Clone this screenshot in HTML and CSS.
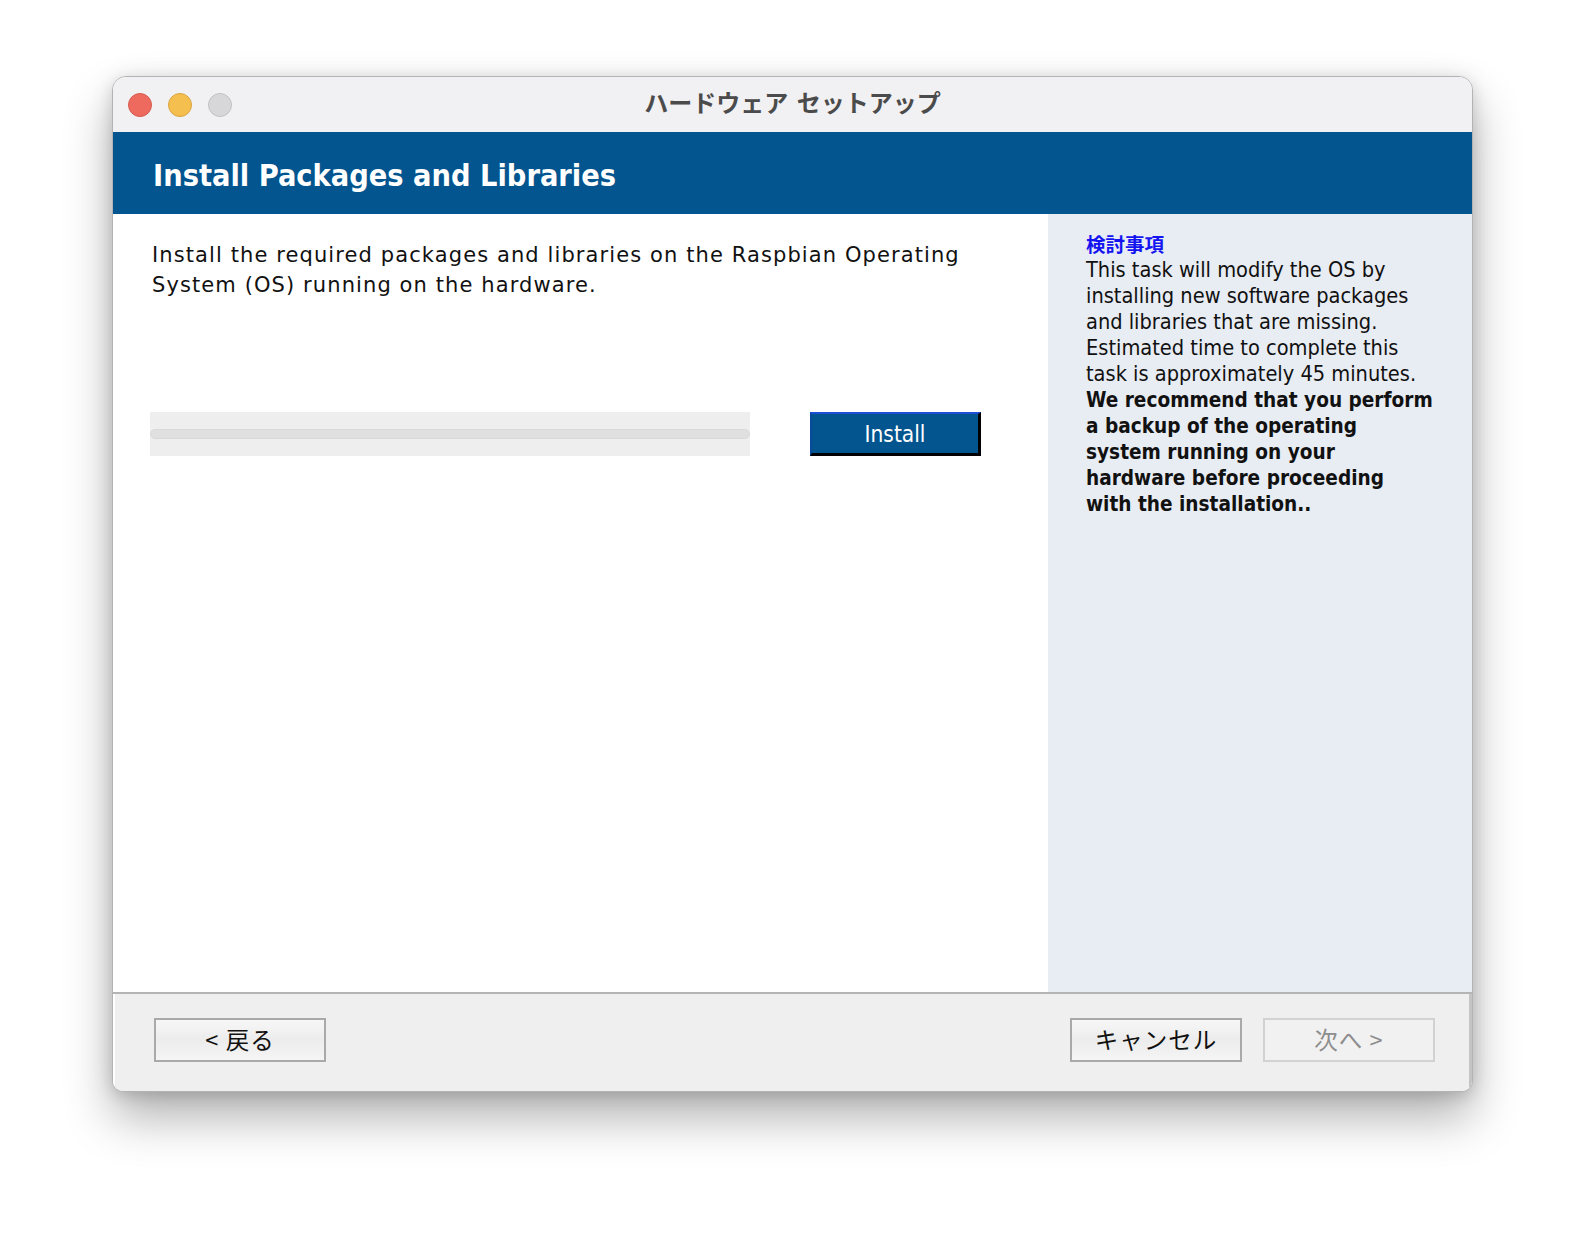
FILE: index.html
```html
<!DOCTYPE html>
<html lang="ja">
<head>
<meta charset="utf-8">
<title>ハードウェア セットアップ</title>
<link rel="stylesheet" href="styles.css">
</head>
<body>
<div class="stage">
  <div class="window">
    <div class="titlebar">
      <div class="lights">
        <span class="light red"></span>
        <span class="light yellow"></span>
        <span class="light gray"></span>
      </div>
      <div class="wtitle">ハードウェア セットアップ</div>
      <div class="tb-spacer"></div>
    </div>
    <div class="banner">
      <h1 class="banner-title">Install Packages and Libraries</h1>
    </div>
    <div class="main">
      <div class="pane">
        <p class="intro">Install the required packages and libraries on the Raspbian Operating<br>System (OS) running on the hardware.</p>
        <div class="install-row">
          <div class="progress"><div class="track"></div></div>
          <button class="install-btn">Install</button>
        </div>
      </div>
      <aside class="notes">
        <div class="notes-title">検討事項</div>
        <p class="notes-text">This task will modify the OS by<br>installing new software packages<br>and libraries that are missing.<br>Estimated time to complete this<br>task is approximately 45 minutes.<br><b class="notes-strong">We recommend that you perform<br>a backup of the operating<br>system running on your<br>hardware before proceeding<br>with the installation..</b></p>
      </aside>
    </div>
    <div class="footer">
      <button class="btn">&lt; 戻る</button>
      <div class="footer-spacer"></div>
      <button class="btn">キャンセル</button>
      <button class="btn btn-disabled">次へ &gt;</button>
    </div>
  </div>
</div>
</body>
</html>
```

FILE: styles.css
```css
html, body {
  margin: 0;
  padding: 0;
  background: #ffffff;
}

body {
  width: 1584px;
  height: 1240px;
  overflow: hidden;
  font-family: "DejaVu Sans", "Noto Sans CJK JP", sans-serif;
}

.stage {
  padding: 76px 0 0 112px;
}

.window {
  width: 1361px;
  height: 1016px;
  box-sizing: border-box;
  border: 1px solid #b3b3b3;
  border-radius: 14px 14px 11px 11px;
  overflow: hidden;
  display: flex;
  flex-direction: column;
  background: #ffffff;
  box-shadow: 0 26px 48px rgba(0, 0, 0, 0.30), 0 4px 14px rgba(0, 0, 0, 0.10), 0 0 24px rgba(0, 0, 0, 0.07);
}

/* title bar */
.titlebar {
  height: 55px;
  flex: none;
  background: #f1f0f2;
  display: grid;
  grid-template-columns: 1fr auto 1fr;
  align-items: center;
}

.lights {
  display: flex;
  gap: 16px;
  padding-left: 15px;
}

.light {
  width: 24px;
  height: 24px;
  box-sizing: border-box;
  border-radius: 50%;
  border: 1px solid transparent;
}

.red { background: #ee6a5f; border-color: #d65a4f; }
.yellow { background: #f5bf4f; border-color: #dba43f; }
.gray { background: #d7d6d8; border-color: #c2c1c3; }

.wtitle {
  font-family: "Noto Sans CJK JP", sans-serif;
  font-weight: 700;
  font-size: 24px;
  letter-spacing: 0;
  word-spacing: 3px;
  color: #4b4b4b;
  margin-bottom: 6px;
}

/* blue banner */
.banner {
  height: 82px;
  flex: none;
  box-sizing: border-box;
  background: #02558f;
  display: flex;
  align-items: center;
  padding: 4px 0 0 40px;
}

.banner-title {
  margin: 0;
  font-family: "DejaVu Sans Condensed", "DejaVu Sans", sans-serif;
  font-weight: 700;
  font-size: 30.4px;
  color: #ffffff;
}

/* main */
.main {
  height: 778px;
  flex: none;
  display: flex;
}

.pane {
  width: 935px;
  flex: none;
  box-sizing: border-box;
  padding: 26px 0 0 37px;
  background: #ffffff;
}

.intro {
  margin: 0 0 0 2px;
  font-family: "DejaVu Sans", sans-serif;
  font-size: 21px;
  line-height: 30px;
  letter-spacing: 1.1px;
  color: #111111;
}

.install-row {
  margin-top: 112px;
  display: flex;
  align-items: center;
  gap: 60px;
}

.progress {
  width: 600px;
  height: 44px;
  background: #eeeeee;
  display: flex;
  align-items: center;
}

.track {
  width: 100%;
  height: 10px;
  box-sizing: border-box;
  border-radius: 5px;
  background: #e0e0e0;
  border: 1px solid #d9d9d9;
}

.install-btn {
  width: 171px;
  height: 44px;
  box-sizing: border-box;
  padding: 0;
  margin: 0;
  background: #02558f;
  color: #ffffff;
  font-family: "DejaVu Sans Condensed", "DejaVu Sans", sans-serif;
  font-size: 22.5px;
  border-style: solid;
  border-width: 2px 3px 3px 2px;
  border-color: #1c4fd6 #000000 #000000 #0b4a9a;
}

/* notes */
.notes {
  flex: 1;
  background: #e8ecf3;
  padding: 17px 20px 0 38px;
}

.notes-title {
  font-family: "Noto Sans CJK JP", sans-serif;
  font-weight: 700;
  font-size: 19.5px;
  line-height: 26px;
  color: #1414f0;
}

.notes-text {
  margin: 0;
  font-family: "DejaVu Sans Condensed", "DejaVu Sans", sans-serif;
  font-size: 21.6px;
  line-height: 26px;
  color: #111111;
}

.notes-strong {
  font-weight: 700;
  font-size: 20.6px;
}

/* footer */
.footer {
  flex: 1;
  background: #efefef;
  border-top: 2px solid #b4b4b4;
  box-shadow: inset 2px 0 0 #ffffff, inset -3px 0 0 #c4c4c4;
  display: flex;
  align-items: flex-start;
  gap: 21px;
  padding: 24px 37px 0 41px;
}

.footer-spacer {
  flex: 1;
}

.btn {
  width: 172px;
  height: 44px;
  box-sizing: border-box;
  margin: 0;
  padding: 0 0 3px 0;
  border: 2px solid #a9a9a9;
  background: linear-gradient(180deg, #f7f7f7 0%, #ececec 50%, #f5f5f5 100%);
  font-family: "Noto Sans CJK JP", sans-serif;
  font-size: 23.5px;
  color: #111111;
  letter-spacing: 1px;
}

.btn-disabled {
  border-color: #d2d2d2;
  background: #f1f1f1;
  color: #8d8d8d;
}
```
